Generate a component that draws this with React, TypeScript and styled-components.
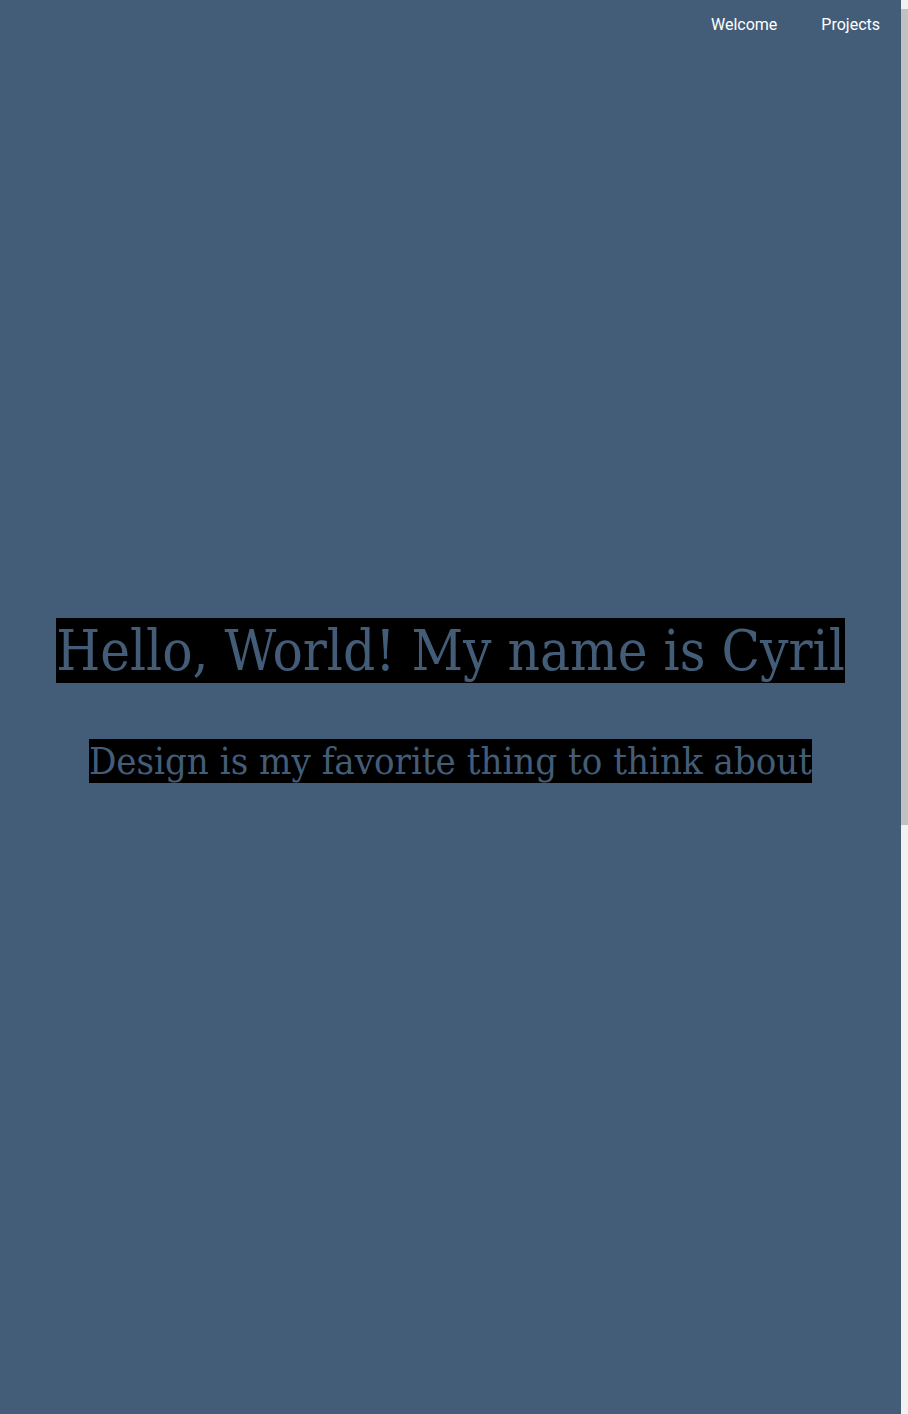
import React from 'react';
import styled, { createGlobalStyle } from 'styled-components';

const GlobalStyle = createGlobalStyle`
  html, body {
    margin: 0;
    padding: 0;
    background-color: #435d78;
  }

  body {
    font-family: Roboto, "Liberation Sans", sans-serif;
  }
`;

const Page = styled.div`
  min-height: 100vh;
  padding-right: 7px;
  background-color: #435d78;
`;

// thin scrollbar strip as seen on the right edge
const ScrollTrack = styled.div`
  position: fixed;
  top: 0;
  right: 0;
  bottom: 0;
  width: 7px;
  padding: 9px 0;
  box-sizing: border-box;
  background-color: #f1f1f1;
`;

const ScrollThumb = styled.div`
  height: 816px;
  background-color: #c1c1c1;
`;

const Header = styled.header`
  display: flex;
  justify-content: flex-end;
  align-items: center;
  height: 48px;
  padding-right: 21px;
  gap: 44px;
`;

const NavLink = styled.a`
  color: #fff;
  font-size: 16px;
  text-decoration: none;
  cursor: pointer;
`;

const Hero = styled.section`
  display: flex;
  flex-direction: column;
  align-items: center;
  padding-top: 570px;
`;

const Title = styled.h1`
  margin: 0;
  font-family: "DejaVu Serif Condensed", "DejaVu Serif", serif;
  font-weight: 300;
  font-size: 56px;
  text-align: center;
`;

const Subtitle = styled.h2`
  margin: 56px 0 0;
  font-family: "DejaVu Serif Condensed", "DejaVu Serif", serif;
  font-weight: 300;
  font-size: 38px;
  text-align: center;
`;

const Highlight = styled.span`
  background-color: #000;
  color: #435d78;
`;

const App = () => (
  <Page>
    <GlobalStyle />
    <Header>
      <NavLink>Welcome</NavLink>
      <NavLink>Projects</NavLink>
    </Header>
    <Hero>
      <Title>
        <Highlight>Hello, World! My name is Cyril</Highlight>
      </Title>
      <Subtitle>
        <Highlight>Design is my favorite thing to think about</Highlight>
      </Subtitle>
    </Hero>
    <ScrollTrack>
      <ScrollThumb />
    </ScrollTrack>
  </Page>
);

export default App;
